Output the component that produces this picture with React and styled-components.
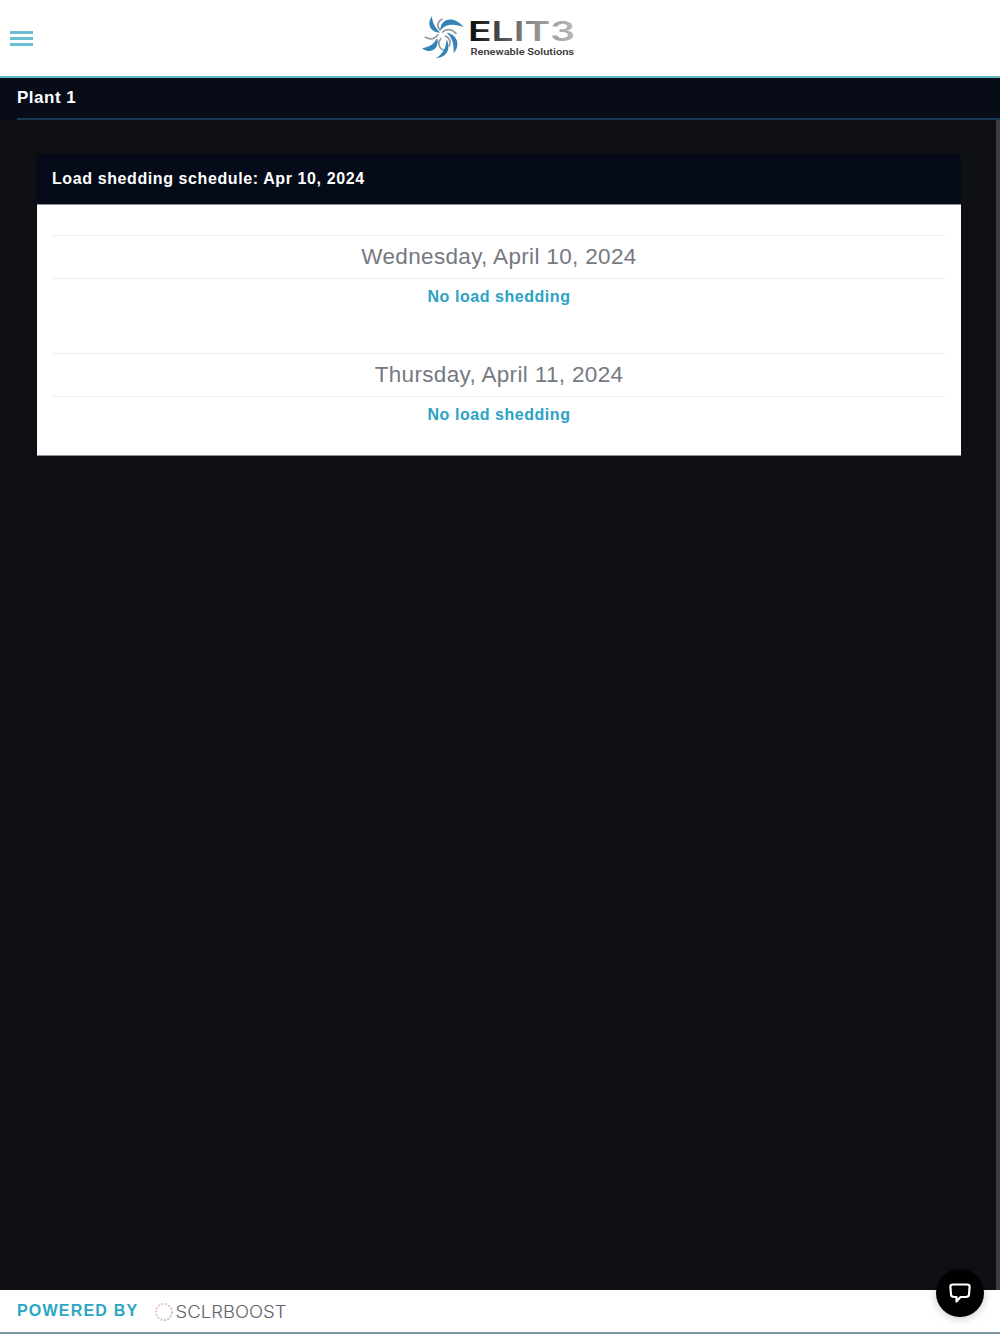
import React from "react";
import styled, { createGlobalStyle } from "styled-components";

const days = [
  { date: "Wednesday, April 10, 2024", status: "No load shedding" },
  { date: "Thursday, April 11, 2024", status: "No load shedding" },
];

const outerBlades = [
  "M42 13C24 36 38 62 66 62C52 48 43 34 42 13Z",
  "M67 56C66 20 106 8 138 46C112 35 82 34 67 56Z",
  "M86 62C116 66 130 98 107 124C108 98 104 78 86 62Z",
  "M86 82C100 112 86 136 54 139C76 125 84 108 86 82Z",
  "M12 108C36 130 66 110 58 78C46 98 34 106 12 108Z",
];

const innerBlades = [
  "M66 54C56 44 58 28 72 22",
  "M74 60C86 48 102 52 114 64",
  "M82 72C96 78 98 90 94 102",
  "M68 80C58 92 62 108 76 114",
  "M60 68C48 84 34 82 22 76",
];

function BrandMark() {
  return (
    <BrandLogo viewBox="0 0 160 50" role="img" aria-label="Elite Renewable Solutions">
      <defs>
        <linearGradient id="brand" x1="0" x2="1" y1="0" y2="0">
          <stop offset="0" stopColor="#080808" />
          <stop offset="0.3" stopColor="#4a4a4a" />
          <stop offset="0.6" stopColor="#8d8d8d" />
          <stop offset="1" stopColor="#b9b9b9" />
        </linearGradient>
      </defs>
      <g transform="translate(0 -1) scale(0.3333)">
        {innerBlades.map((d) => (
          <path key={d} d={d} className="inner" />
        ))}
        {outerBlades.map((d) => (
          <path key={d} d={d} className="outer" />
        ))}
      </g>
      <text x="50" y="28" className="name" textLength="107" lengthAdjust="spacingAndGlyphs">
        ELIT3
      </text>
      <text x="52.5" y="41.5" className="tagline" textLength="103.5" lengthAdjust="spacingAndGlyphs">
        Renewable Solutions
      </text>
    </BrandLogo>
  );
}

function BoostLogo() {
  return (
    <PoweredLogo viewBox="0 0 134 24" role="img" aria-label="Solrboost">
      <defs>
        <linearGradient id="ring" x1="0" x2="1" y1="0" y2="1">
          <stop offset="0" stopColor="#f0c9b4" />
          <stop offset="1" stopColor="#c9bfd6" />
        </linearGradient>
      </defs>
      <circle cx="10" cy="12" r="8" />
      <text x="21.5" y="18" textLength="111" lengthAdjust="spacingAndGlyphs">
        SCLRBOOST
      </text>
    </PoweredLogo>
  );
}

function App() {
  return (
    <>
      <GlobalStyle />
      <Page>
        <Header>
          <MenuButton aria-label="Menu">
            <span />
            <span />
            <span />
          </MenuButton>
          <BrandMark />
        </Header>
        <PlantBar>
          <PlantName>Plant 1</PlantName>
        </PlantBar>
        <Content>
          <Card>
            <CardTitle>Load shedding schedule: Apr 10, 2024</CardTitle>
            <CardBody>
              {days.map((day) => (
                <Day key={day.date}>
                  <DayDate>{day.date}</DayDate>
                  <DayStatus>{day.status}</DayStatus>
                </Day>
              ))}
            </CardBody>
          </Card>
        </Content>
        <Footer>
          <Powered>POWERED BY</Powered>
          <BoostLogo />
        </Footer>
        <ChatButton aria-label="Chat">
          <svg width="24" height="22" viewBox="0 0 24 22">
            <path d="M5 2.5H19Q21.8 2.5 21.6 5L21 12.5Q20.8 15 18 15H12.5L8.5 19.5V15H6Q3.2 15 3 12.5L2.4 5Q2.2 2.5 5 2.5Z" />
          </svg>
        </ChatButton>
      </Page>
    </>
  );
}

export default App;

const GlobalStyle = createGlobalStyle`
  * {
    box-sizing: border-box;
  }

  body {
    margin: 0;
    font-family: "Liberation Sans", Arial, sans-serif;
    background: #0f1014;
  }
`;

const Page = styled.div`
  position: relative;
  display: flex;
  flex-direction: column;
  height: 1334px;
  overflow: hidden;
`;

const Header = styled.header`
  display: grid;
  grid-template-columns: 1fr 160px 1fr;
  align-items: center;
  height: 78px;
  flex-shrink: 0;
  padding: 0 4px 0 0;
  background: #fff;
  border-bottom: 2px solid #62b6c4;
`;

const MenuButton = styled.button`
  display: flex;
  flex-direction: column;
  gap: 3px;
  width: 23px;
  margin-left: 10px;
  padding: 0;
  border: 0;
  background: none;

  span {
    height: 3px;
    background: #6bbdd2;
  }
`;

const BrandLogo = styled.svg`
  width: 160px;
  height: 50px;

  .outer {
    fill: #3583b5;
  }

  .inner {
    fill: none;
    stroke: #9499a3;
    stroke-width: 5;
    stroke-linecap: round;
  }

  .name {
    font-family: Inter, sans-serif;
    font-size: 26.5px;
    font-weight: 600;
    fill: url(#brand);
  }

  .tagline {
    font-family: Roboto, sans-serif;
    font-size: 9px;
    font-weight: 600;
    fill: #3c3c3c;
  }
`;

const PlantBar = styled.div`
  height: 42px;
  flex-shrink: 0;
  padding-left: 17px;
  background: #080c18;
`;

const PlantName = styled.h1`
  height: 42px;
  margin: 0;
  border-bottom: 2px solid #163a54;
  color: #fff;
  font-size: 17px;
  line-height: 39px;
  letter-spacing: 0.5px;
`;

const Content = styled.main`
  flex: 1;
  padding: 34px 35px 0 36px;
  background: #0f1014;
  border-right: 4px solid #3b3f43;
`;

const Card = styled.section`
  background: #050b18;
`;

const CardTitle = styled.h2`
  height: 50px;
  margin: 0;
  padding-left: 16px;
  color: #fff;
  font-size: 16px;
  line-height: 50px;
  letter-spacing: 0.6px;
`;

const CardBody = styled.div`
  display: flex;
  flex-direction: column;
  gap: 38px;
  height: 252px;
  margin-left: 1px;
  padding: 30px 16px 0 16px;
  background: #fff;
  border-top: 1px solid #8b8e94;
  border-bottom: 1px solid #8b8e94;
`;

const Day = styled.div`
  text-align: center;
`;

const DayDate = styled.div`
  height: 44px;
  border-top: 1px solid #eee;
  border-bottom: 1px solid #eee;
  color: #757981;
  font-size: 22.5px;
  line-height: 41px;
  letter-spacing: 0.34px;
`;

const DayStatus = styled.div`
  height: 36px;
  color: #2ba2c6;
  font-size: 16px;
  font-weight: 700;
  line-height: 36px;
  letter-spacing: 0.55px;
`;

const Footer = styled.footer`
  display: flex;
  align-items: center;
  gap: 16px;
  height: 44px;
  flex-shrink: 0;
  padding-left: 17px;
  background: #fff;
  border-bottom: 2px solid #7d97a5;
`;

const Powered = styled.span`
  color: #2ba6c4;
  font-size: 16px;
  font-weight: 700;
  letter-spacing: 1.2px;
`;

const PoweredLogo = styled.svg`
  width: 134px;
  height: 24px;
  margin-top: 2px;

  circle {
    fill: none;
    stroke: url(#ring);
    stroke-width: 2;
    stroke-dasharray: 2 1.5;
  }

  text {
    font-family: Inter, sans-serif;
    font-size: 17px;
    font-weight: 300;
    fill: #5d616a;
  }
`;

const ChatButton = styled.button`
  position: absolute;
  right: 16px;
  bottom: 17px;
  display: flex;
  align-items: center;
  justify-content: center;
  width: 48px;
  height: 48px;
  padding: 0;
  border: 0;
  border-radius: 50%;
  background: #000;
  box-shadow: 0 2px 8px rgba(0, 0, 0, 0.2);

  path {
    fill: none;
    stroke: #fff;
    stroke-width: 2.2;
    stroke-linejoin: round;
  }
`;
